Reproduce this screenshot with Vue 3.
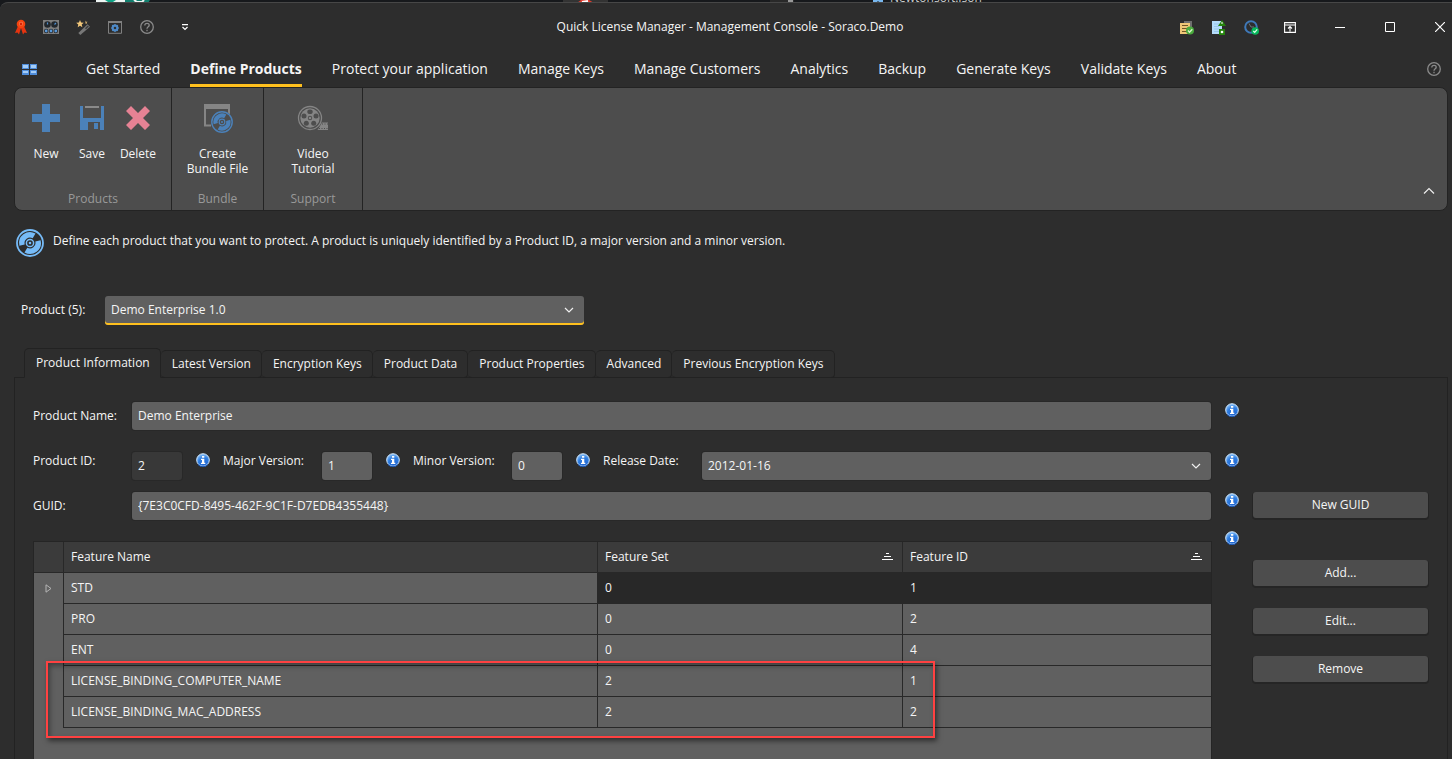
<script setup>
import { ref } from 'vue'

const menu = ['Get Started', 'Define Products', 'Protect your application', 'Manage Keys', 'Manage Customers', 'Analytics', 'Backup', 'Generate Keys', 'Validate Keys', 'About']
const tabs = ['Product Information', 'Latest Version', 'Encryption Keys', 'Product Data', 'Product Properties', 'Advanced', 'Previous Encryption Keys']
const activeMenu = ref('Define Products')
const activeTab = ref('Product Information')
const product = ref('Demo Enterprise 1.0')
const productName = ref('Demo Enterprise')
const productId = ref('2')
const major = ref('1')
const minor = ref('0')
const releaseDate = ref('2012-01-16')
const guid = ref('{7E3C0CFD-8495-462F-9C1F-D7EDB4355448}')
const features = [
  { name: 'STD', set: 0, id: 1 },
  { name: 'PRO', set: 0, id: 2 },
  { name: 'ENT', set: 0, id: 4 },
  { name: 'LICENSE_BINDING_COMPUTER_NAME', set: 2, id: 1 },
  { name: 'LICENSE_BINDING_MAC_ADDRESS', set: 2, id: 2 },
]
</script>

<template>
  <div class="screen">
    <svg width="0" height="0" class="defs" aria-hidden="true">
      <defs>
        <radialGradient id="infoFill" cx="0.6" cy="0.8" r="0.8">
          <stop offset="0" stop-color="#1c62cf" />
          <stop offset="0.6" stop-color="#2f7de0" />
          <stop offset="1" stop-color="#8cc4fa" />
        </radialGradient>
        <symbol id="info" viewBox="0 0 14 14">
          <circle cx="7" cy="7" r="6.3" fill="url(#infoFill)" stroke="#cfe6fc" stroke-width="1" />
          <path d="M2 11.5A6.7 6.7 0 0 0 12 11.5" fill="none" stroke="#1550ad" stroke-width="1" />
          <path d="M6 3h2.3v1.8H6zM5 5.8h3.3v4h1v1.2H5V9.8h1V7H5z" fill="#fff" />
        </symbol>
        <symbol id="chevron" viewBox="0 0 10 10">
          <path d="M1 3l4 4 4-4" fill="none" stroke="#f0f0f0" stroke-width="1.2" />
        </symbol>
        <symbol id="disc" viewBox="0 0 28 28">
          <circle cx="14" cy="14" r="13" fill="none" stroke="currentColor" stroke-width="1.8" />
          <path d="M3.400 16.800A11 11 0 0 1 19.500 4.500L16.700 9.200A5.500 5.500 0 0 0 8.700 15.400z" fill="currentColor" />
          <path d="M24.600 11.200A11 11 0 0 1 8.500 23.500L11.300 18.800A5.500 5.500 0 0 0 19.300 12.600z" fill="currentColor" />
          <circle cx="14" cy="14" r="3.600" fill="none" stroke="currentColor" stroke-width="1.500" />
          <circle cx="14" cy="14" r="1.300" fill="currentColor" />
        </symbol>
        <symbol id="help" viewBox="0 0 14 14">
          <circle cx="7" cy="7" r="6.300" fill="none" stroke="#8a8a8a" stroke-width="1.300" />
          <path d="M4.800 5.500c0-3 4.600-2.800 4.400-.1C9.100 6.700 7 6.900 7 8.700M7 9.700v1.500" fill="none" stroke="#8a8a8a" stroke-width="1.300" />
        </symbol>
      </defs>
    </svg>

    <div class="desktop" aria-hidden="true">
      <svg class="strip-logo" width="56" height="3" viewBox="0 0 56 3">
        <path d="M0 0h29v3H0z" fill="#eef4f2" /><path d="M9 0h11l-3 2h-5z" fill="#10a587" />
        <path d="M29 0h25l-2 3H29z" fill="#12806f" /><path d="M38 0l3 2h5l2-2" fill="none" stroke="#eef4f2" stroke-width="2" />
      </svg>
      <svg class="strip-tab" width="45" height="3" viewBox="0 0 45 3">
        <path d="M0 0h45v3H0z" fill="#333" /><path d="M14 3l4-3h8l5 3z" fill="#e33b2e" /><path d="M19 2l6-1" stroke="#fff" stroke-width="2" />
      </svg>
      <svg class="strip-scroll" width="24" height="3" viewBox="0 0 24 3">
        <path d="M0 0h24v3H0z" fill="#292929" /><path d="M18 0h5v3h-5z" fill="#999" />
      </svg>
      <svg class="strip-file" width="10" height="3" viewBox="0 0 10 3"><path d="M0 0h10v2H6L5 1 4 2H0z" fill="#78b7ee" /></svg>
      <span class="strip-text">Newtonsoft.Json</span>
    </div>

    <main class="window">
      <header class="titlebar">
        <div class="quick">
          <span><svg width="18" height="16" viewBox="-4 0 18 16">
            <path d="M4 7L1 14l2.500-.4L5 15.500 7 9l2 6.500 1.500-1.900 2.500.4-3-7z" fill="#e63410" />
            <circle cx="7" cy="5" r="4.300" fill="#f5430f" /><circle cx="7" cy="4.700" r="2" fill="#ff8a5e" /><circle cx="7" cy="5" r="1.400" fill="#d52407" />
          </svg></span>
          <span><svg width="16" height="14" viewBox="0 0 16 14">
            <path d="M0 0h16v14H0z" fill="#7e7e7e" />
            <circle cx="4.500" cy="4.500" r="3.300" fill="#22272c" /><circle cx="11.500" cy="4.500" r="3.300" fill="#22272c" />
            <path d="M4.500 4.500V2.500M11.500 4.500l1.500-1.500" stroke="#4f8fcf" stroke-width="1.200" />
            <g fill="#26292d"><circle cx="3.200" cy="11" r="2.200" /><circle cx="8" cy="11" r="2.200" /><circle cx="12.800" cy="11" r="2.200" /></g>
            <g fill="#5a9ada"><circle cx="3.200" cy="11" r="1.400" /><circle cx="8" cy="11" r="1.400" /><circle cx="12.800" cy="11" r="1.400" /></g>
          </svg></span>
          <span><svg width="15" height="15" viewBox="0 0 15 15">
            <path d="M4 0l1.100 2.500 2.700.2-2.100 1.800.7 2.800L4 5.800 1.700 7.300l.6-2.800L.200 2.700l2.700-.2zM9.500.500l.6 1.200 1.400.1-1 1 .2 1.300-1.200-.7" fill="#f2c77a" />
            <path d="M4.300 15L2.300 13 11.500 4.200 14 6.700z" fill="#777" /><path d="M9 8.200l2.800-2.600 1 1-2.800 2.600z" fill="#3a3a3a" />
          </svg></span>
          <span><svg width="14" height="13" viewBox="0 0 14 13">
            <path d="M.5.500h13v11.800H.500z" fill="none" stroke="#808080" /><path d="M0 0h14v2H0z" fill="#808080" />
            <circle cx="7" cy="7" r="2.400" fill="none" stroke="#4e8ac8" stroke-width="2" />
            <path d="M7 3v8M3 7h8M4.200 4.200l5.600 5.600M9.800 4.200l-5.600 5.600" stroke="#4e8ac8" stroke-width="1.200" /><circle cx="7" cy="7" r="1.200" fill="#2d2d2d" />
          </svg></span>
          <span><svg width="14" height="14"><use href="#help" /></svg></span>
          <svg class="more" width="8" height="7" viewBox="0 0 8 7"><path d="M1 .7h6M1.500 3L4 5.500 6.500 3" fill="none" stroke="#fff" stroke-width="1.200" /></svg>
        </div>
        <h1>Quick License Manager - Management Console - Soraco.Demo</h1>
        <div class="tools">
          <svg width="14" height="15" viewBox="0 0 14 15">
            <path d="M4 1h8v8H4z" fill="#6e6e6e" /><path d="M0 3h10v11H0z" fill="#efc777" /><path d="M2 5.500h6M2 8.500h6M2 11.500h6" stroke="#6f5626" stroke-width="1" />
            <circle cx="10" cy="10.500" r="4" fill="#4aab3d" /><path d="M8 10.500l1.500 1.700 2.800-3" fill="none" stroke="#d8f5c8" stroke-width="1.300" />
          </svg>
          <svg width="14" height="15" viewBox="0 0 14 15">
            <path d="M0 1h10v13H0z" fill="#b5dcfb" /><path d="M2 4h5M2 6.500h5M2 9h5M2 11.500h5" stroke="#8bbce6" stroke-width=".7" /><path d="M10 0l4 6H6z" fill="#25830d" />
            <path d="M10 2v2" stroke="#fff" /><path d="M7 9h6v6H7z" fill="#25830d" /><circle cx="10" cy="12" r="1.300" fill="#fff" />
          </svg>
          <svg width="15" height="15" viewBox="0 0 15 15">
            <circle cx="7" cy="7" r="5.800" fill="none" stroke="#3f79b9" stroke-width="2" /><path d="M5 3.500L7 7h3" fill="none" stroke="#69757f" stroke-width="1" />
            <circle cx="11.200" cy="11" r="3.800" fill="#08b85b" /><path d="M9.300 11l1.400 1.400 2.500-3" fill="none" stroke="#dfffe9" stroke-width="1.200" />
          </svg>
        </div>
        <div class="wincontrols">
          <button aria-label="Ribbon display"><svg width="12" height="11" viewBox="0 0 12 11"><path d="M.6.600h10.800v9.800H.6zM.6 3h10.800M6 9.500V4.800M4 6.500l2-2 2 2" fill="none" stroke="#fff" stroke-width="1.100" /></svg></button>
          <button aria-label="Minimize"><svg width="10" height="10" viewBox="0 0 10 10"><path d="M0 5.500h10" stroke="#fff" /></svg></button>
          <button aria-label="Maximize"><svg width="10" height="10" viewBox="0 0 10 10"><path d="M.5.500h9v9h-9z" fill="none" stroke="#fff" /></svg></button>
          <button aria-label="Close"><svg width="10" height="10" viewBox="0 0 10 10"><path d="M0 0l10 10M10 0L0 10" stroke="#fff" stroke-width="1.200" /></svg></button>
        </div>
      </header>

      <nav class="menu">
        <button class="tiles" aria-label="Application menu">
          <svg width="15" height="11" viewBox="0 0 15 11"><path d="M0 0h7v5H0zM8 0h7v5H8zM0 6h7v5H0zM8 6h7v5H8z" fill="#4f8ddb" /><path d="M1 1h5v3H1zM9 1h5v3H9zM1 7h5v2H1zM9 7h5v2H9z" fill="#a5cdf7" /></svg>
        </button>
        <button v-for="m in menu" :key="m" class="menu-item" :class="{ active: m === activeMenu }" @click="activeMenu = m">{{ m }}</button>
        <button class="menu-help" aria-label="Help"><svg width="14" height="14"><use href="#help" /></svg></button>
      </nav>

      <section class="ribbon">
        <div class="group products">
          <div class="actions">
            <button><svg width="30" height="30" viewBox="0 0 30 30"><path d="M11 1h8v10h10v8H19v10h-8V19H1v-8h10z" fill="#4b81b9" /></svg>New</button>
            <button><svg width="30" height="30" viewBox="0 0 30 30">
              <path d="M3 3h3v12h18V3h3v24H3z" fill="#4b81b9" /><path d="M8 3h14v2H8z" fill="#8a8a8a" />
              <path d="M11 19h12v8H11z" fill="#4d4d4d" /><path d="M17 20h4v6h-4z" fill="#4b81b9" />
            </svg>Save</button>
            <button><svg width="30" height="30" viewBox="0 0 30 30"><path d="M8 3l7 7 7-7 5 5-7 7 7 7-5 5-7-7-7 7-5-5 7-7-7-7z" fill="#e68294" /></svg>Delete</button>
          </div>
          <span class="group-name">Products</span>
        </div>
        <div class="group bundle">
          <div class="actions">
            <button><svg width="30" height="30" viewBox="0 0 30 30">
              <path d="M2 22.500V2h24v9M1 22.500h7" fill="none" stroke="#858585" stroke-width="2" /><path d="M1 1h26v5H1z" fill="#858585" />
              <circle cx="19" cy="19" r="11" fill="#4d4d4d" /><svg x="8" y="8" width="22" height="22" color="#4b81b9"><use href="#disc" /></svg>
            </svg>Create<br />Bundle File</button>
          </div>
          <span class="group-name">Bundle</span>
        </div>
        <div class="group support">
          <div class="actions">
            <button><svg width="32" height="30" viewBox="0 0 32 30">
              <circle cx="13" cy="15" r="11.500" fill="none" stroke="#858585" stroke-width="1.300" /><circle cx="13" cy="15" r="9.700" fill="#858585" />
              <g fill="#4d4d4d"><ellipse cx="13" cy="8.800" rx="2.700" ry="2.300" /><circle cx="19" cy="13" r="2.500" /><circle cx="16.700" cy="20.200" r="2.500" /><circle cx="9.300" cy="20.200" r="2.500" /><circle cx="7" cy="13" r="2.500" /><circle cx="13" cy="15" r="2.200" /></g>
              <circle cx="13" cy="15" r="1.300" fill="#858585" />
              <path d="M21 26.500l4-7h6v7.500H20z" fill="#858585" /><path d="M25 21h6M22 25.500h9" stroke="#4d4d4d" stroke-width="1" stroke-dasharray="1 1.500" />
            </svg>Video<br />Tutorial</button>
          </div>
          <span class="group-name">Support</span>
        </div>
        <button class="collapse" aria-label="Collapse ribbon"><svg width="12" height="8" viewBox="0 0 12 8"><path d="M1 6.500l5-5 5 5" fill="none" stroke="#eee" stroke-width="1.200" /></svg></button>
      </section>

      <section class="intro">
        <svg width="28" height="28" color="#76bbf8"><use href="#disc" /></svg>
        <p>Define each product that you want to protect. A product is uniquely identified by a Product ID, a major version and a minor version.</p>
      </section>

      <div class="picker">
        <label for="product">Product (5):</label>
        <div class="select focused">
          <select id="product" v-model="product"><option>Demo Enterprise 1.0</option></select>
          <svg width="10" height="10"><use href="#chevron" /></svg>
        </div>
      </div>

      <div class="tabs" role="tablist">
        <button v-for="t in tabs" :key="t" role="tab" :aria-selected="t === activeTab" :class="{ active: t === activeTab }" @click="activeTab = t">{{ t }}</button>
      </div>

      <section class="panel">
        <div class="row name-row">
          <label for="name">Product Name:</label>
          <input id="name" v-model="productName" class="wide" />
          <svg class="info" width="14" height="14"><use href="#info" /></svg>
          <div class="side"></div>
        </div>
        <div class="row version-row">
          <label for="pid">Product ID:</label>
          <input id="pid" v-model="productId" class="short" disabled />
          <svg class="info" width="14" height="14"><use href="#info" /></svg>
          <label for="major">Major Version:</label>
          <input id="major" v-model="major" class="short" />
          <svg class="info" width="14" height="14"><use href="#info" /></svg>
          <label for="minor">Minor Version:</label>
          <input id="minor" v-model="minor" class="short" />
          <svg class="info" width="14" height="14"><use href="#info" /></svg>
          <label for="release">Release Date:</label>
          <div class="select wide">
            <select id="release" v-model="releaseDate"><option>2012-01-16</option></select>
            <svg width="10" height="10"><use href="#chevron" /></svg>
          </div>
          <svg class="info" width="14" height="14"><use href="#info" /></svg>
          <div class="side"></div>
        </div>
        <div class="row guid-row">
          <label for="guid">GUID:</label>
          <input id="guid" v-model="guid" class="wide" />
          <svg class="info" width="14" height="14"><use href="#info" /></svg>
          <div class="side"><button class="command">New GUID</button></div>
        </div>
        <div class="row grid-row">
          <div class="grid">
            <table>
              <colgroup><col class="c-mark" /><col class="c-name" /><col class="c-set" /><col /></colgroup>
              <thead>
                <tr>
                  <th></th>
                  <th>Feature Name</th>
                  <th><div class="sorted">Feature Set<svg width="11" height="8" viewBox="0 0 11 8"><path d="M4 .500h3M2 3.500h7M0 6.500h11" stroke="#fff" /></svg></div></th>
                  <th><div class="sorted">Feature ID<svg width="11" height="8" viewBox="0 0 11 8"><path d="M4 .500h3M2 3.500h7M0 6.500h11" stroke="#fff" /></svg></div></th>
                </tr>
              </thead>
              <tbody>
                <tr v-for="(f, i) in features" :key="f.name" :class="{ current: i === 0 }">
                  <td class="mark"><svg v-if="i === 0" width="7" height="9" viewBox="0 0 7 9"><path d="M1 .8v7.400l5-3.700z" fill="none" stroke="#b5b5b5" /></svg></td>
                  <td>{{ f.name }}</td>
                  <td class="value">{{ f.set }}</td>
                  <td class="value">{{ f.id }}</td>
                </tr>
              </tbody>
            </table>
            <div class="callout"></div>
          </div>
          <svg class="info" width="14" height="14"><use href="#info" /></svg>
          <div class="side stack">
            <button class="command">Add...</button>
            <button class="command">Edit...</button>
            <button class="command">Remove</button>
          </div>
        </div>
      </section>
    </main>
  </div>
</template>

<style>
html, body { background: #2d2d2d; overflow: hidden; }
</style>

<style scoped>
* { box-sizing: border-box; }
.screen { height: 100vh; min-height: 600px; display: flex; flex-direction: column; background: #17191c; color: #f5f5f5; font: 12px/16px "Open Sans", "Noto Sans", sans-serif; overflow: hidden; }
.defs { position: absolute; }
svg { display: block; flex: none; }
button { font: inherit; color: inherit; background: none; border: 0; padding: 0; }
h1, p { margin: 0; }
.desktop { height: 2px; position: relative; overflow: hidden; }
.strip-logo, .strip-tab, .strip-scroll, .strip-file, .strip-text { position: absolute; top: 0; }
.strip-logo { left: 96px; }
.strip-tab { left: 563px; }
.strip-scroll { left: 770px; }
.strip-file { left: 873px; }
.strip-text { left: 890px; top: -10px; color: #ccc; }

.window { flex: 1; min-height: 0; display: flex; flex-direction: column; background: #2d2d2d; border-top: 1px solid #474747; border-radius: 8px 0 0 0; }

.titlebar { display: grid; grid-template-columns: 1fr auto 1fr; align-items: center; height: 48px; padding-left: 8px; position: relative; }
.titlebar h1 { grid-column: 2; font-size: 12px; font-weight: 400; }
.quick { display: flex; align-items: center; grid-column: 1; margin-left: -5px; }
.quick span { width: 32px; display: flex; justify-content: center; }
.more { margin-left: 18px; }
.tools { position: absolute; right: 193px; top: 17px; display: flex; gap: 18px; }
.wincontrols { grid-column: 3; justify-self: end; display: flex; margin-right: -13px; }
.wincontrols button { width: 50px; display: flex; justify-content: center; }

.menu { display: flex; align-items: stretch; height: 36px; padding: 0 11px 0 22px; font-size: 14px; line-height: 20px; }
.tiles { display: flex; align-items: center; margin-right: 49px; }
.menu-item { margin-right: 30px; white-space: nowrap; border-bottom: 3px solid transparent; border-top: 3px solid transparent; }
.menu-item.active { font-weight: 700; border-bottom-color: #ffc01e; }
.menu-help { margin-left: auto; display: flex; align-items: center; }

.ribbon { display: flex; height: 124px; margin: 0 4px 0 14px; background: #4d4d4d; border: 1px solid #232323; border-radius: 8px; position: relative; }
.group { display: flex; flex-direction: column; align-items: center; border-right: 1px solid #232323; padding: 15px 0 3px; }
.products { width: 157px; }
.products .actions { padding-right: 2px; }
.bundle { width: 92px; }
.support { width: 99px; }
.actions { display: flex; flex: 1; justify-content: center; align-items: flex-start; text-align: center; line-height: 15px; }
.actions button { min-width: 46px; }
.actions button > svg { margin: 0 auto 13px; }
.group-name { color: #999; }
.collapse { position: absolute; right: 12px; bottom: 15px; }

.intro { display: flex; gap: 9px; padding: 18px 16px 0; }
.intro p { padding-top: 4px; }
.picker { display: flex; align-items: center; margin-top: 38px; padding-left: 21px; height: 30px; }
.picker label { width: 84px; }
.picker .select { width: 33.5%; height: 29px; }

.select { position: relative; display: flex; }
.select select, input { width: 100%; height: 28px; appearance: none; font: inherit; color: #f5f5f5; background: #606060; border: 0; border-radius: 3px; padding: 0 6px; outline: 0; box-shadow: 0 0 0 1px #282828; }
input { padding-bottom: 1px; }
.select svg { position: absolute; right: 10px; top: 9px; pointer-events: none; }
.select.focused select { height: 29px; box-shadow: inset 0 -2px #ffc01e; }

.tabs { display: flex; align-items: flex-end; margin: 23px 0 -1px 24px; position: relative; }
.tabs button { height: 28px; padding: 0 10px 0 11px; border: 1px solid #222; border-left: 0; border-radius: 5px 5px 4px 4px; white-space: nowrap; }
.tabs .active { height: 30px; border-left: 1px solid #222; border-bottom-color: #2d2d2d; border-radius: 5px 5px 0 0; background: #2d2d2d; }

.panel { flex: 1; min-height: 0; display: flex; flex-direction: column; margin: 0 4px 0 14px; border: 1px solid #222; border-bottom: 0; padding: 24px 19px 0 18px; }
.row { display: flex; align-items: flex-start; }
.row label { width: 99px; line-height: 18px; flex: none; }
.name-row label, .guid-row label { line-height: 28px; }
.version-row { margin-top: 22px; }
.guid-row { margin-top: 12px; }
.wide { flex: 1; min-width: 0; }
input.short { width: 50px; flex: none; }
input:disabled { background: #383838; }
.info { margin: 1px 13px 0 14px; }
.side { width: 175px; flex: none; margin-left: 1px; }
.command { display: block; width: 100%; height: 26px; background: #4d4d4d; border-radius: 3px; box-shadow: 0 1px 0 1px #252525; color: #f5f5f5; }
.stack { display: flex; flex-direction: column; gap: 22px; padding-top: 30px; }
.grid-row { margin-top: 10px; flex: 1; min-height: 0; }
.grid { flex: 1; min-width: 0; align-self: stretch; margin: 11px -1px 0 0; background: #606060; border: 1px solid #252525; border-bottom: 0; position: relative; }
table { width: 100%; table-layout: fixed; border-collapse: separate; border-spacing: 0; }
.c-mark { width: 30px; }
.c-name { width: 534px; }
.c-set { width: 305px; }
th, td { height: 31px; padding: 0 7px; text-align: left; font-weight: 400; border-right: 1px solid #282828; border-bottom: 1px solid #282828; }
th { background: #3b3b3b; }
th:last-child, td:last-child { border-right: 0; }
.sorted { display: flex; justify-content: space-between; align-items: center; padding-right: 2px; }
td.mark { border-bottom: 0; padding: 0 11px; }
.current .value { background: #282828; }
.callout { position: absolute; left: 12px; top: 119px; width: 889px; height: 77px; border: 2px solid #ff4141; box-shadow: 2px 3px 5px rgba(0, 0, 0, .5), inset 2px 3px 5px rgba(0, 0, 0, .35); }
</style>
